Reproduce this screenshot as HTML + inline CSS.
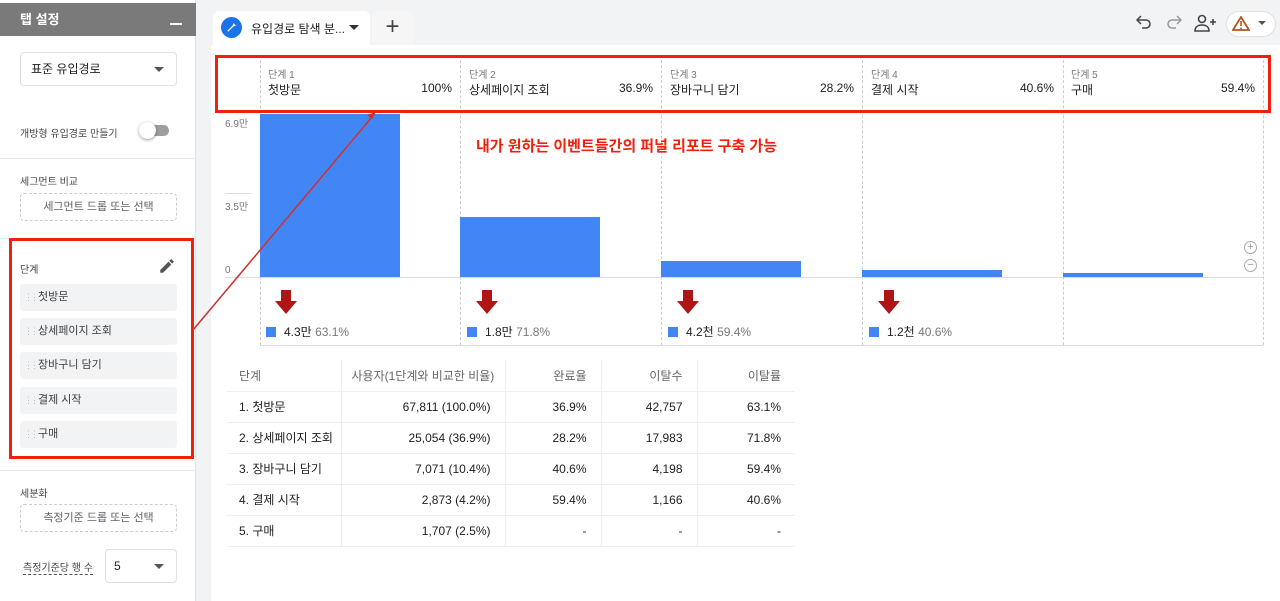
<!DOCTYPE html>
<html><head><meta charset="utf-8"><style>
*{margin:0;padding:0;box-sizing:border-box}
body{width:1280px;height:601px;overflow:hidden;background:#f1f3f4;font-family:"Liberation Sans","Noto Sans CJK KR",sans-serif;color:#202124;position:relative}
.a{position:absolute}
.t{font-size:11px}
.side{left:0;top:0;width:196px;height:601px;background:#fff;border-right:1px solid #e0e0e0}
.item{position:absolute;left:20px;width:157px;height:27px;background:#f1f3f4;border-radius:3px;font-size:11px;line-height:27px;padding-left:18px;color:#3c4043}
.item:before{content:"⋮⋮";position:absolute;left:4px;top:0;font-size:9px;color:#bbb;letter-spacing:-3px}
.sel{position:absolute;left:20px;width:157px;border:1px solid #e0e0e0;border-radius:4px;background:#fff;font-size:12px}
.dash{position:absolute;left:20px;width:157px;height:28px;border:1px dashed #ccc;border-radius:4px;font-size:11px;text-align:center;line-height:26px;color:#5f6368}
.hr{position:absolute;left:0;width:196px;height:1px;background:#e8e8e8}
.col{position:absolute;top:55px;height:290px;border-left:1px dashed #ccc}
.bar{position:absolute;background:#4285f4}
.stl{position:absolute;top:66px;font-size:10px;color:#777}
.stn{position:absolute;top:81px;font-size:12px}
.stp{position:absolute;top:81px;font-size:12px;text-align:right;width:60px}
.arr{position:absolute;top:290px;width:24px;height:24px}
.lg{position:absolute;top:323px;font-size:12px}
.lg i{display:inline-block;width:10px;height:10px;background:#4285f4;margin-right:8px;vertical-align:-1px}
.lg span{color:#777}
table{position:absolute;left:227px;top:360px;border-collapse:collapse;font-size:12px;white-space:nowrap;table-layout:fixed;width:568px}
td{height:31px;border-bottom:1px solid #eee;padding:0 14px 0 10px;text-align:right;overflow:hidden}
td:first-child{text-align:left;padding-left:12px}
tr:first-child td{color:#666;height:31px}
td+td{border-left:1px solid #eee}
</style></head><body>
<div class="a side">
 <div class="a" style="left:0;top:3px;width:196px;height:33px;background:#7a7a7a;color:#fff;font-size:13px;font-weight:bold;line-height:33px;padding-left:20px">탭 설정<span class="a" style="left:170px;top:20px;width:12px;height:2px;background:#fff"></span></div>
 <div class="sel" style="top:52px;height:34px;line-height:32px;padding-left:10px">표준 유입경로<span class="a" style="right:12px;top:14px;border:5px solid transparent;border-top:5px solid #555"></span></div>
 <div class="a t" style="left:20px;top:125px;font-size:10px;color:#444">개방형 유입경로 만들기</div>
 <div class="a" style="left:143px;top:125px;width:26px;height:11px;border-radius:6px;background:#9e9e9e"></div>
 <div class="a" style="left:139px;top:122px;width:17px;height:17px;border-radius:50%;background:#fff;box-shadow:0 1px 3px rgba(0,0,0,.4)"></div>
 <div class="hr" style="top:158px"></div>
 <div class="a" style="left:20px;top:173px;font-size:10px;color:#444">세그먼트 비교</div>
 <div class="dash" style="top:193px">세그먼트 드롭 또는 선택</div>
 <div class="hr" style="top:238px"></div>
 <div class="a" style="left:20px;top:261px;font-size:10px;color:#444">단계</div>
 <svg class="a" style="left:158px;top:257px" width="18" height="18" viewBox="0 0 24 24"><path fill="#555" d="M3 17.25V21h3.75L17.8 9.94l-3.750-3.75L3 17.25zM20.7 7.04a1 1 0 000-1.41l-2.34-2.34a1 1 0 00-1.41 0l-1.83 1.830 3.75 3.75 1.83-1.83z"/></svg>
 <div class="item" style="top:284px">첫방문</div>
 <div class="item" style="top:318px">상세페이지 조회</div>
 <div class="item" style="top:352px">장바구니 담기</div>
 <div class="item" style="top:387px">결제 시작</div>
 <div class="item" style="top:421px">구매</div>
 <div class="hr" style="top:470px"></div>
 <div class="a" style="left:20px;top:485px;font-size:10px;color:#444">세분화</div>
 <div class="dash" style="top:504px">측정기준 드롭 또는 선택</div>
 <div class="a" style="left:23px;top:559px;font-size:10px;color:#444;border-bottom:1px dashed #555">측정기준당 행 수</div>
 <div class="sel" style="left:105px;width:72px;top:549px;height:34px;line-height:32px;padding-left:8px">5<span class="a" style="right:12px;top:14px;border:5px solid transparent;border-top:5px solid #555"></span></div>
</div>
<div class="a" style="left:9px;top:238px;width:185px;height:221px;border:3px solid #f0200c"></div>

<div class="a" style="left:211px;top:45px;width:1069px;height:556px;background:#fff"></div>
<div class="a" style="left:213px;top:11px;width:157px;height:34px;background:#fff;border-radius:6px 6px 0 0"></div>
<div class="a" style="left:221px;top:17px;width:21px;height:21px;border-radius:50%;background:#1a73e8"></div>
<svg class="a" style="left:225px;top:21px" width="13" height="13" viewBox="0 0 24 24"><path fill="none" stroke="#fff" stroke-width="2.5" d="M5 19L17 7M15 5l4 4"/></svg>
<div class="a" style="left:251px;top:20px;font-size:12px">유입경로 탐색 분...</div>
<div class="a" style="left:349px;top:25px;border:5px solid transparent;border-top:5px solid #333"></div>
<div class="a" style="left:372px;top:11px;width:41px;height:34px;background:#f6f6f6;border-radius:6px 6px 0 0;font-size:24px;text-align:center;line-height:32px;color:#444">+</div>
<svg class="a" style="left:1136px;top:15px" width="16" height="14" viewBox="0 0 16 14"><path d="M5 1L1 5l4 4M1 5h9a4 4 0 010 8H6" fill="none" stroke="#444" stroke-width="1.5"/></svg>
<svg class="a" style="left:1166px;top:15px" width="16" height="14" viewBox="0 0 16 14"><path d="M11 1l4 4-4 4M15 5H6a4 4 0 000 8h4" fill="none" stroke="#999" stroke-width="1.5"/></svg>
<svg class="a" style="left:1194px;top:14px" width="24" height="18" viewBox="0 0 24 18"><circle cx="8" cy="5" r="3.5" fill="none" stroke="#444" stroke-width="1.6"/><path d="M1 17c0-4 3-6 7-6s7 2 7 6z" fill="none" stroke="#444" stroke-width="1.6"/><path d="M19 5v6M16 8h6" stroke="#444" stroke-width="1.6"/></svg>
<div class="a" style="left:1226px;top:11px;width:50px;height:26px;border:1px solid #e0e0e0;border-radius:13px;background:#fff"></div>
<svg class="a" style="left:1232px;top:16px" width="18" height="15" viewBox="0 0 18 15"><path d="M9 1L17 14H1z" fill="none" stroke="#b3541e" stroke-width="1.8"/><path d="M9 5v5M9 11.5v1.5" stroke="#b3541e" stroke-width="1.6"/></svg>
<div class="a" style="left:1258px;top:21px;border:4px solid transparent;border-top:4px solid #555"></div>

<div class="a" style="left:225px;top:115px;font-size:10px;color:#777">6.9만</div>
<div class="a" style="left:225px;top:193px;width:26px;height:1px;background:#ddd"></div>
<div class="a" style="left:225px;top:198px;font-size:10px;color:#777">3.5만</div>
<div class="a" style="left:225px;top:265px;font-size:10px;color:#777">0</div>
<div class="a" style="left:225px;top:277px;width:1038px;height:1px;background:#ddd"></div>
<div class="a" style="left:260px;top:345px;width:1003px;height:1px;background:#ddd"></div>
<div class="col" style="left:260px"></div><div class="col" style="left:460px"></div><div class="col" style="left:661px"></div><div class="col" style="left:862px"></div><div class="col" style="left:1063px"></div><div class="col" style="left:1263px"></div>
<div class="bar" style="left:260px;top:114px;width:140px;height:163px"></div>
<div class="bar" style="left:460px;top:217px;width:140px;height:60px"></div>
<div class="bar" style="left:661px;top:261px;width:140px;height:16px"></div>
<div class="bar" style="left:862px;top:270px;width:140px;height:7px"></div>
<div class="bar" style="left:1063px;top:273px;width:140px;height:4px"></div>
<div class="a" style="left:1244px;top:241px;width:13px;height:13px;border:1px solid #aaa;border-radius:50%;font-size:11px;line-height:11px;text-align:center;color:#999">+</div>
<div class="a" style="left:1244px;top:259px;width:13px;height:13px;border:1px solid #aaa;border-radius:50%;font-size:11px;line-height:10px;text-align:center;color:#999">−</div>

<div class="stl" style="left:268px">단계 1</div><div class="stn" style="left:268px">첫방문</div><div class="stp" style="left:392px">100%</div>
<div class="stl" style="left:469px">단계 2</div><div class="stn" style="left:469px">상세페이지 조회</div><div class="stp" style="left:593px">36.9%</div>
<div class="stl" style="left:670px">단계 3</div><div class="stn" style="left:670px">장바구니 담기</div><div class="stp" style="left:794px">28.2%</div>
<div class="stl" style="left:871px">단계 4</div><div class="stn" style="left:871px">결제 시작</div><div class="stp" style="left:994px">40.6%</div>
<div class="stl" style="left:1071px">단계 5</div><div class="stn" style="left:1071px">구매</div><div class="stp" style="left:1195px">59.4%</div>
<div class="a" style="left:215px;top:55px;width:1056px;height:58px;border:3px solid #f0200c"></div>

<div class="a" style="left:476px;top:135px;font-size:15px;font-weight:bold;color:#f0200c">내가 원하는 이벤트들간의 퍼널 리포트 구축 가능</div>

<svg class="arr" style="left:274px" viewBox="0 0 24 24"><path d="M7 0h10v11h6L12 24 1 11h6z" fill="#b01515"/></svg>
<svg class="arr" style="left:475px" viewBox="0 0 24 24"><path d="M7 0h10v11h6L12 24 1 11h6z" fill="#b01515"/></svg>
<svg class="arr" style="left:676px" viewBox="0 0 24 24"><path d="M7 0h10v11h6L12 24 1 11h6z" fill="#b01515"/></svg>
<svg class="arr" style="left:877px" viewBox="0 0 24 24"><path d="M7 0h10v11h6L12 24 1 11h6z" fill="#b01515"/></svg>
<div class="lg" style="left:266px"><i></i>4.3만 <span>63.1%</span></div>
<div class="lg" style="left:467px"><i></i>1.8만 <span>71.8%</span></div>
<div class="lg" style="left:668px"><i></i>4.2천 <span>59.4%</span></div>
<div class="lg" style="left:869px"><i></i>1.2천 <span>40.6%</span></div>

<svg class="a" style="left:0;top:0" width="1280" height="601"><line x1="193" y1="330" x2="372" y2="117" stroke="#d32f2f" stroke-width="1.5"/><path d="M376 112l-9 3 5 4z" fill="#d32f2f"/></svg>

<table>
<colgroup><col style="width:114px"><col style="width:164px"><col style="width:96px"><col style="width:96px"><col style="width:98px"></colgroup>
<tr><td>단계</td><td>사용자(1단계와 비교한 비율)</td><td>완료율</td><td>이탈수</td><td>이탈률</td></tr>
<tr><td>1. 첫방문</td><td>67,811 (100.0%)</td><td>36.9%</td><td>42,757</td><td>63.1%</td></tr>
<tr><td>2. 상세페이지 조회</td><td>25,054 (36.9%)</td><td>28.2%</td><td>17,983</td><td>71.8%</td></tr>
<tr><td>3. 장바구니 담기</td><td>7,071 (10.4%)</td><td>40.6%</td><td>4,198</td><td>59.4%</td></tr>
<tr><td>4. 결제 시작</td><td>2,873 (4.2%)</td><td>59.4%</td><td>1,166</td><td>40.6%</td></tr>
<tr><td>5. 구매</td><td>1,707 (2.5%)</td><td>-</td><td>-</td><td>-</td></tr>
</table>
</body></html>
